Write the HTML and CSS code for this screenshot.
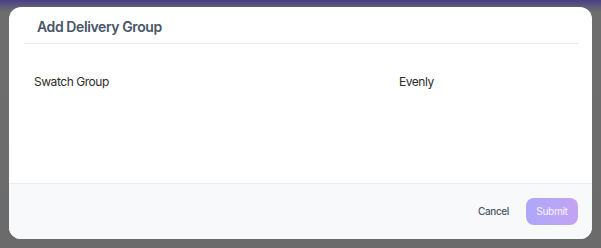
FILE: index.html
```html
<!DOCTYPE html>
<html>
  <head>
    <title>Add Delivery Group</title>
    <link rel="stylesheet" href="styles.css">
  </head>
  <body>
    <div class="overlay">
      <div class="modal">
        <div class="modal-header">
          <h2>Add Delivery Group</h2>
        </div>
        <div class="modal-body">
          <div class="field">Swatch Group</div>
          <div class="field">Evenly</div>
        </div>
        <div class="modal-footer">
          <button class="cancel-button">Cancel</button>
          <button class="submit-button" disabled>Submit</button>
        </div>
      </div>
    </div>
  </body>
</html>
```

FILE: styles.css
```css
/* page + backdrop */
body {
  margin: 0;
  padding: 0;
  font-family: Inter, "Noto Sans", sans-serif;
}
.overlay {
  width: 601px;
  height: 248px;
  box-sizing: border-box;
  padding: 7px 9px 9px 9px;
  background: linear-gradient(to bottom, #4a3d86 0px, #5c5a7a 6px, #6d6d6d 12px, #6b6b6b 100%);
}
/* modal */
.modal {
  height: 232px;
  background-color: white;
  border-radius: 12px;
  display: flex;
  flex-direction: column;
  overflow: hidden;
}
.modal-header {
  margin: 0 14px 0 15px;
  border-bottom: 1px solid #e8e9f0;
  height: 37px;
  box-sizing: border-box;
  padding: 10px 0 0 13px;
}
.modal-header h2 {
  margin: 0;
  font-size: 14px;
  line-height: 20px;
  font-weight: 600;
  letter-spacing: -0.4px;
  color: #475569;
}
.modal-body {
  flex: 1;
  display: grid;
  grid-template-columns: 365px 1fr;
  padding: 29px 25px 0 25px;
}
.field {
  font-size: 12px;
  line-height: 18px;
  letter-spacing: -0.45px;
  color: #2b2b2b;
}
.modal-footer {
  height: 56px;
  box-sizing: border-box;
  border-top: 1px solid #e9ebef;
  background-color: #f8f9fb;
  display: flex;
  align-items: center;
  justify-content: flex-end;
  padding: 0 14px 1px 0;
  gap: 17px;
}
.cancel-button {
  border: none;
  background: none;
  padding: 0;
  font-family: inherit;
  font-size: 10px;
  font-weight: 500;
  letter-spacing: -0.35px;
  color: #4b5563;
}
.submit-button {
  border: none;
  width: 52px;
  height: 27px;
  border-radius: 8px;
  background: linear-gradient(to right, #ada7fb, #c3a4f2);
  color: rgba(255, 255, 255, 0.8);
  font-family: inherit;
  font-size: 10px;
  font-weight: 500;
  letter-spacing: -0.35px;
  padding: 0;
}
```
